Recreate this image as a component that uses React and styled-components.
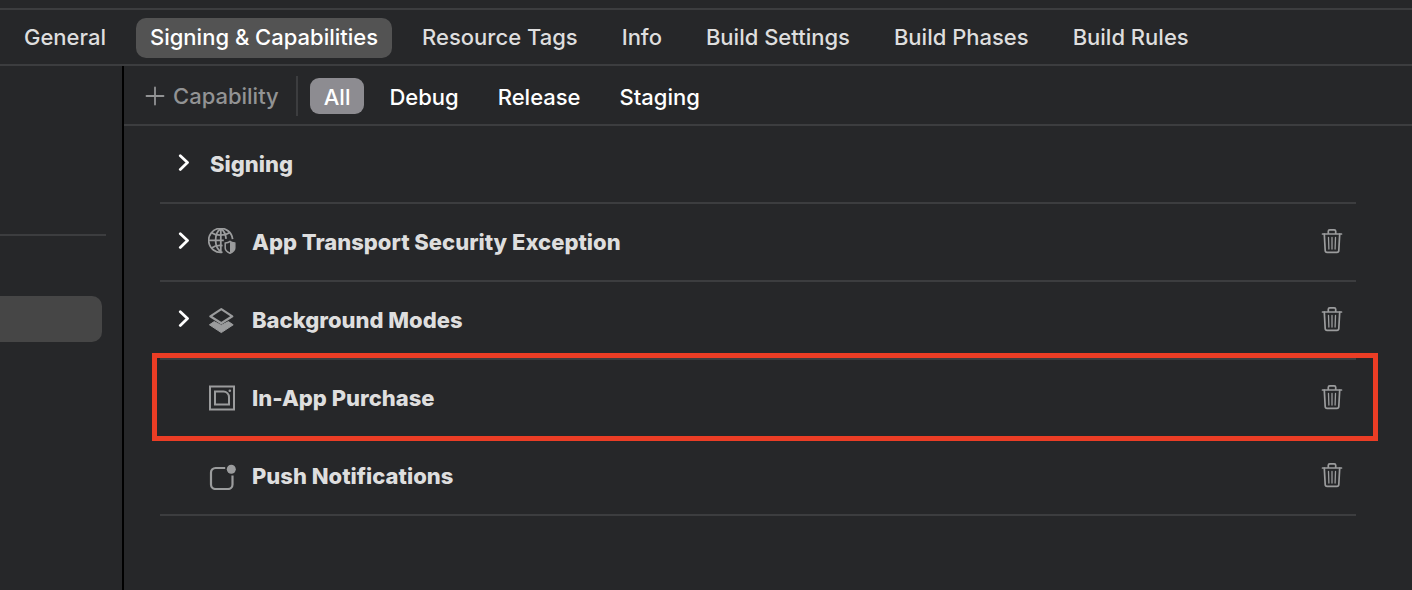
import React, { useState } from 'react';
import styled, { createGlobalStyle } from 'styled-components';

const GlobalStyle = createGlobalStyle`
  * {
    box-sizing: border-box;
  }

  body {
    margin: 0;
    background-color: #262729;
    font-family: Inter, "Liberation Sans", sans-serif;
    font-size: 22px;
    font-weight: 500;
    line-height: 28px;
  }

  button {
    margin: 0;
    padding: 0;
    border: none;
    background: none;
    color: inherit;
    font: inherit;
    cursor: pointer;
  }
`;

const Page = styled.div`
  display: flex;
  flex-direction: column;
  min-height: 100vh;
  padding-top: 8px;
`;

const TabBar = styled.nav`
  display: flex;
  align-items: center;
  gap: 16px;
  height: 58px;
  padding: 2px 10px 0;
  border-top: 2px solid #3c3d3f;
  border-bottom: 2px solid #3c3d3f;
`;

const Tab = styled.button`
  && {
    height: 40px;
    padding: 0 14px 2px;
    border-radius: 10px;
    white-space: nowrap;
    background-color: ${props => (props.$active ? '#535353' : 'transparent')};
    color: ${props => (props.$active ? '#ffffff' : '#dedede')};
  }
`;

const Body = styled.div`
  display: flex;
  flex: 1;
`;

const Sidebar = styled.aside`
  flex: none;
  width: 124px;
  padding-top: 168px;
  border-right: 2px solid #000;
`;

const SidebarLine = styled.hr`
  height: 2px;
  margin: 0 16px 60px 0;
  border: none;
  background-color: #3c3d3f;
`;

const SidebarSelection = styled.div`
  height: 46px;
  margin-right: 20px;
  border-radius: 0 10px 10px 0;
  background-color: #464646;
`;

const Main = styled.main`
  flex: 1;
  min-width: 0;
`;

const FilterBar = styled.div`
  display: flex;
  align-items: center;
  height: 60px;
  padding: 2px 0 0 21px;
  border-bottom: 2px solid #3c3d3f;
`;

const AddButton = styled.button`
  && {
    display: flex;
    align-items: center;
    gap: 8px;
    color: #929394;
  }
`;

const Divider = styled.div`
  width: 2px;
  height: 40px;
  margin: 0 12px 0 17px;
  background-color: #3c3d3f;
`;

const Filters = styled.div`
  display: flex;
  gap: 11px;
`;

const Filter = styled.button`
  && {
    height: 36px;
    padding: 2px 14px 0;
    border-radius: 9px;
    background-color: ${props => (props.$active ? '#8d8c91' : 'transparent')};
    color: #ffffff;
  }
`;

const List = styled.ul`
  list-style: none;
  margin: 0;
  padding: 0 56px 0 36px;
`;

const Row = styled.li`
  position: relative;
  display: flex;
  align-items: center;
  height: 78px;
  padding: 0 12px 0 14px;
  border-bottom: 2px solid #3c3d3f;
`;

const Highlight = styled.div`
  position: absolute;
  top: -7px;
  right: -22px;
  bottom: -5px;
  left: -8px;
  border: 5px solid #eb3d25;
  pointer-events: none;
`;

const Disclosure = styled.div`
  display: flex;
  flex: none;
  width: 32px;
  margin-right: 2px;

  svg,
  button {
    display: block;
  }
`;

const IconBox = styled.span`
  display: flex;
  flex: none;
  width: 44px;
  color: #9b9c9d;
`;

const Title = styled.h2`
  flex: 1;
  margin: 0;
  padding-left: ${props => (props.$indent ? '2px' : '0')};
  color: #dedede;
  font-size: 22px;
  font-weight: 800;
`;

const DeleteButton = styled.button`
  && {
    color: #9b9c9d;
  }

  svg {
    display: block;
  }
`;

const PlusIcon = () => (
  <svg width="20" height="20" viewBox="0 0 20 20" fill="none" stroke="currentColor" strokeWidth="1.8" strokeLinecap="round">
    <path d="M10 1.5v17M1.5 10h17" />
  </svg>
);

const ChevronIcon = () => (
  <svg width="20" height="20" viewBox="0 0 20 20" fill="none" stroke="#fff" strokeWidth="2.8" strokeLinecap="round" strokeLinejoin="round">
    <path d="M6.3 1.8 13.5 8.6 6.3 15.4" />
  </svg>
);

const GlobeIcon = () => (
  <svg width="30" height="28" viewBox="1 1 30 28" fill="none" stroke="currentColor" strokeWidth="1.8">
    <path d="M15.5 25.2A12 12 0 1 1 25.6 12.2" />
    <path d="M13.8 1.4C10 4 8.6 9 8.6 13.3s1.6 9 5.6 11.9M13.8 1.4c3.5 2.5 5 6.5 5.3 10.5M13.8 1.4v23.8" />
    <path d="M4.6 5.8C9 9 17.5 9 22.5 5.8M1.8 13.3h15M4.6 21c3-2.2 7-2.9 11-2.4" />
    <path d="M23 14.4c1.4 1.2 3 1.5 4.8 1.7v4.9c0 2.3-2 4-4.8 5.2-2.8-1.2-4.8-2.9-4.8-5.2v-4.9c1.8-.2 3.4-.5 4.8-1.7Z" strokeWidth="1.5" />
    <path d="M23 14.8v11.2c2.8-1.2 4.5-2.9 4.5-5v-4.7c-1.7-.2-3.1-.4-4.5-1.5Z" fill="currentColor" stroke="none" />
  </svg>
);

const LayersIcon = () => (
  <svg width="28" height="28" viewBox="0 -1 28 28" strokeLinejoin="round">
    <path d="M1.4 17.8 6.2 14.6 13.3 18.3 20.4 14.6 25.2 17.8 13.3 25.6Z" fill="currentColor" stroke="currentColor" strokeWidth="1" />
    <path d="M13.3 2.2 24.3 9.3 13.3 16.3 2.3 9.3Z" fill="none" stroke="currentColor" strokeWidth="2.2" />
  </svg>
);

const PurchaseIcon = () => (
  <svg width="28" height="28" viewBox="0 0 28 28" fill="none" stroke="currentColor">
    <rect x="2" y="2.5" width="24" height="23" strokeWidth="2" />
    <path d="M7 7.5h8.5a5.5 5.5 0 0 1 5.5 5.5v7.5H7Z" strokeWidth="2" />
    <circle cx="21.8" cy="6.8" r="1.3" fill="currentColor" stroke="none" />
  </svg>
);

const NotificationIcon = () => (
  <svg width="30" height="28" viewBox="0 -1 30 28" fill="none" stroke="currentColor">
    <path d="M17.2 5H7.500A4.500 4.500 0 0 0 3 9.500v12A4.500 4.500 0 0 0 7.500 26h12.500a4.500 4.500 0 0 0 4.500-4.500V12.500" strokeWidth="2.2" />
    <circle cx="23.3" cy="6.300" r="4.500" fill="currentColor" stroke="none" />
  </svg>
);

const TrashIcon = () => (
  <svg width="24" height="28" viewBox="0 1 24 28" fill="none" stroke="currentColor" strokeWidth="1.7" strokeLinecap="round" strokeLinejoin="round">
    <path d="M2.5 7h19M8.3 6.8V4.3a1.5 1.5 0 0 1 1.5-1.5h4.4a1.5 1.5 0 0 1 1.5 1.5v2.500" />
    <path d="M4.3 7.2 5.2 23.5a1.900 1.900 0 0 0 1.900 1.800h9.800a1.900 1.900 0 0 0 1.900-1.800L19.700 7.200" />
    <path d="M8.5 10.5l.4 11.5M12 10.5v11.5M15.5 10.5 15.1 22" strokeWidth="1.3" />
  </svg>
);

const tabs = [
  'General',
  'Signing & Capabilities',
  'Resource Tags',
  'Info',
  'Build Settings',
  'Build Phases',
  'Build Rules',
];

const filters = ['All', 'Debug', 'Release', 'Staging'];

const capabilities = [
  { name: 'Signing', expandable: true },
  { name: 'App Transport Security Exception', expandable: true, Icon: GlobeIcon },
  { name: 'Background Modes', expandable: true, Icon: LayersIcon },
  { name: 'In-App Purchase', Icon: PurchaseIcon, highlighted: true },
  { name: 'Push Notifications', Icon: NotificationIcon },
];

const App = () => {
  const [activeTab, setActiveTab] = useState('Signing & Capabilities');
  const [activeFilter, setActiveFilter] = useState('All');

  return (
    <>
      <GlobalStyle />
      <Page>
        <TabBar>
          {tabs.map(tab => (
            <Tab key={tab} $active={tab === activeTab} onClick={() => setActiveTab(tab)}>
              {tab}
            </Tab>
          ))}
        </TabBar>
        <Body>
          <Sidebar>
            <SidebarLine />
            <SidebarSelection />
          </Sidebar>
          <Main>
            <FilterBar>
              <AddButton>
                <PlusIcon />
                Capability
              </AddButton>
              <Divider />
              <Filters>
                {filters.map(filter => (
                  <Filter key={filter} $active={filter === activeFilter} onClick={() => setActiveFilter(filter)}>
                    {filter}
                  </Filter>
                ))}
              </Filters>
            </FilterBar>
            <List>
              {capabilities.map(({ name, expandable, Icon, highlighted }) => (
                <Row key={name}>
                  <Disclosure>
                    {expandable && (
                      <button aria-label={`Expand ${name}`}>
                        <ChevronIcon />
                      </button>
                    )}
                  </Disclosure>
                  {Icon && (
                    <IconBox>
                      <Icon />
                    </IconBox>
                  )}
                  <Title $indent={!Icon}>{name}</Title>
                  {Icon && (
                    <DeleteButton aria-label={`Delete ${name}`}>
                      <TrashIcon />
                    </DeleteButton>
                  )}
                  {highlighted && <Highlight />}
                </Row>
              ))}
            </List>
          </Main>
        </Body>
      </Page>
    </>
  );
};

export default App;
